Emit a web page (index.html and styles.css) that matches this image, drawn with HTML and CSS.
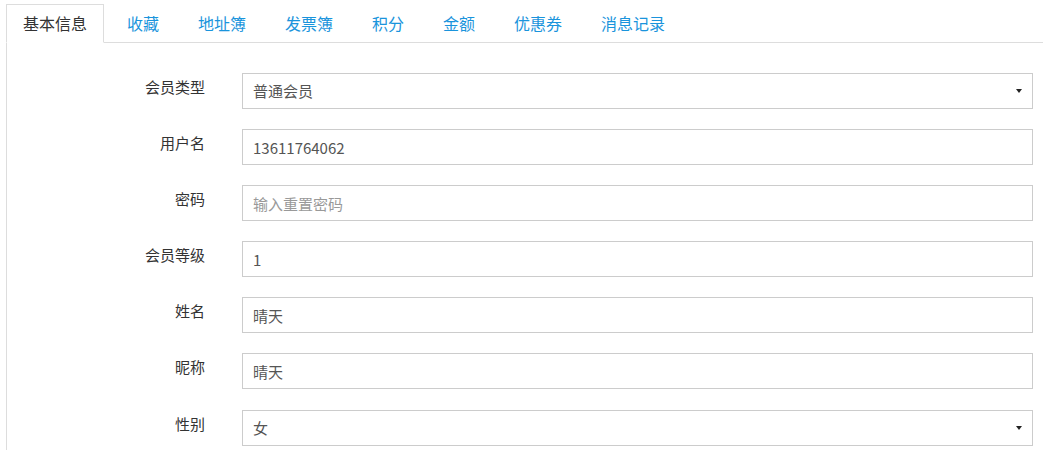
FILE: index.html
```html
<!DOCTYPE html>
<html lang="zh-CN">
<head>
<meta charset="utf-8">
<title>会员信息</title>
<link rel="stylesheet" href="styles.css">
</head>
<body>
<div class="tabs">
  <ul class="tab-list">
    <li class="tab active">基本信息</li>
    <li class="tab">收藏</li>
    <li class="tab">地址簿</li>
    <li class="tab">发票簿</li>
    <li class="tab">积分</li>
    <li class="tab">金额</li>
    <li class="tab">优惠券</li>
    <li class="tab">消息记录</li>
  </ul>
  <div class="panel">
    <form class="form">
      <div class="row">
        <label class="label">会员类型</label>
        <div class="control select"><span>普通会员</span><i class="caret"></i></div>
      </div>
      <div class="row">
        <label class="label">用户名</label>
        <input class="control" type="text" value="13611764062">
      </div>
      <div class="row">
        <label class="label">密码</label>
        <input class="control" type="password" placeholder="输入重置密码">
      </div>
      <div class="row">
        <label class="label">会员等级</label>
        <input class="control" type="text" value="1">
      </div>
      <div class="row">
        <label class="label">姓名</label>
        <input class="control" type="text" value="晴天">
      </div>
      <div class="row">
        <label class="label">昵称</label>
        <input class="control" type="text" value="晴天">
      </div>
      <div class="row">
        <label class="label">性别</label>
        <div class="control select"><span>女</span><i class="caret"></i></div>
      </div>
    </form>
  </div>
</div>
</body>
</html>
```
FILE: styles.css
```css
* { box-sizing: border-box; }
html, body { margin: 0; padding: 0; background: #fff; overflow: hidden; }
body {
  font-family: "Noto Sans CJK SC", "Noto Sans", sans-serif;
  font-size: 15px;
  color: #333;
}
.tabs { margin: 4px 0 0 6px; }
.tab-list {
  list-style: none;
  margin: 0;
  padding: 0;
  display: flex;
  height: 39px;
  border-bottom: 1px solid #ddd;
}
.tab {
  height: 39px;
  line-height: 37px;
  padding: 0 16px;
  margin-right: 5px;
  border: 1px solid transparent;
  font-size: 16px;
  color: #1a94dc;
  white-space: nowrap;
}
.tab.active {
  color: #333;
  background: #fff;
  border-color: #ddd;
  border-bottom-color: #fff;
  margin-right: 6px;
}
.panel {
  border-left: 1px solid #ddd;
  padding-top: 30px;
  height: 420px;
}
.form { display: flex; flex-direction: column; gap: 20px; }
.row:last-child { margin-top: 1px; }
.row {
  display: grid;
  grid-template-columns: 198px 791px;
  column-gap: 37px;
  align-items: start;
}
.label {
  text-align: right;
  line-height: 21px;
  padding-top: 3px;
  color: #333;
}
.control {
  height: 36px;
  width: 791px;
  border: 1px solid #ccc;
  padding: 0 10px;
  font: inherit;
  font-size: 15px;
  color: #555;
  background: #fff;
  outline: none;
  margin: 0;
}
.control::placeholder { color: #999; }
.select {
  display: flex;
  align-items: center;
  line-height: 34px;
}
.caret {
  margin-left: auto;
  width: 0;
  height: 0;
  border-left: 3px solid transparent;
  border-right: 3px solid transparent;
  border-top: 4px solid #222;
}
```
